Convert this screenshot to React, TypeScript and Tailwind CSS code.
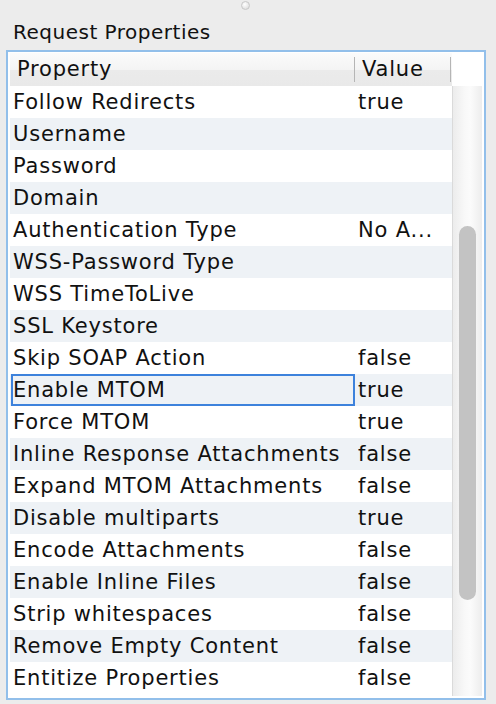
import React from "react";

const rows: [string, string][] = [
  ["Follow Redirects", "true"],
  ["Username", ""],
  ["Password", ""],
  ["Domain", ""],
  ["Authentication Type", "No A..."],
  ["WSS-Password Type", ""],
  ["WSS TimeToLive", ""],
  ["SSL Keystore", ""],
  ["Skip SOAP Action", "false"],
  ["Enable MTOM", "true"],
  ["Force MTOM", "true"],
  ["Inline Response Attachments", "false"],
  ["Expand MTOM Attachments", "false"],
  ["Disable multiparts", "true"],
  ["Encode Attachments", "false"],
  ["Enable Inline Files", "false"],
  ["Strip whitespaces", "false"],
  ["Remove Empty Content", "false"],
  ["Entitize Properties", "false"],
];

export default function App() {
  return (
    <div
      className="w-[496px] h-[704px] bg-[#ececec] flex flex-col overflow-hidden text-[#111]"
      style={{ fontFamily: '"DejaVu Sans", "Liberation Sans", sans-serif' }}
    >
      <div className="h-[12px] flex items-start">
        <div className="ml-[241px] mt-[1px] w-[9px] h-[9px] rounded-full border border-[#c8c8c8] bg-[radial-gradient(circle_at_40%_35%,#ffffff,#d6d6d6)]" />
      </div>
      <div className="h-[38px] flex items-center pl-[13px] pt-[2px] text-[20px] tracking-[0.5px] leading-none">
        Request Properties
      </div>
      <div className="ml-[6px] w-[480px] h-[650px] border-2 border-[#92bfea] bg-white pt-[1px] pl-[2px] pr-[2px] flex">
        <div className="w-[442px] flex flex-col">
          <div className="h-[33px] flex bg-[linear-gradient(to_bottom,#fbfbfb_0%,#f4f4f4_50%,#ebebeb_51%,#e9e9e9_100%)] text-[21px] tracking-[0.8px]">
            <div className="w-[344px] flex items-center pl-[7px] pt-[1px]">Property</div>
            <div className="w-px my-[4px] bg-[#b5b5b5]" />
            <div className="w-[95px] flex items-center pl-[7px] pt-[1px]">Value</div>
            <div className="w-px my-[4px] bg-[#b5b5b5]" />
            <div className="w-[1px]" />
          </div>
          {rows.map(([k, v], i) => (
            <div
              key={k}
              className={
                "h-[32px] flex text-[21px] tracking-[0.8px] " +
                (i % 2 === 1 ? "bg-[#eef2f6]" : "bg-white")
              }
            >
              {k === "Enable MTOM" ? (
                <div className="w-[344px] ml-[1px] flex items-center pt-[1px] whitespace-nowrap border-2 border-[#3d82dc] pl-0">
                  {k}
                </div>
              ) : (
                <div className="w-[345px] flex items-center pl-[3px] pt-[2px] whitespace-nowrap">
                  {k}
                </div>
              )}
              <div className="flex-1 flex items-center pl-[3px] pt-[2px] whitespace-nowrap">{v}</div>
            </div>
          ))}
        </div>
        <div className="w-[30px] flex flex-col">
          <div className="h-[33px] bg-white" />
          <div className="h-[610px] border-l border-[#dadada] bg-[linear-gradient(to_right,#ececec,#f8f8f8_40%,#fbfbfb_60%,#ededed)] pt-[140px] pl-[6px]">
            <div className="w-[17px] h-[374px] rounded-full bg-[#c3c3c3]" />
          </div>
        </div>
      </div>
    </div>
  );
}
